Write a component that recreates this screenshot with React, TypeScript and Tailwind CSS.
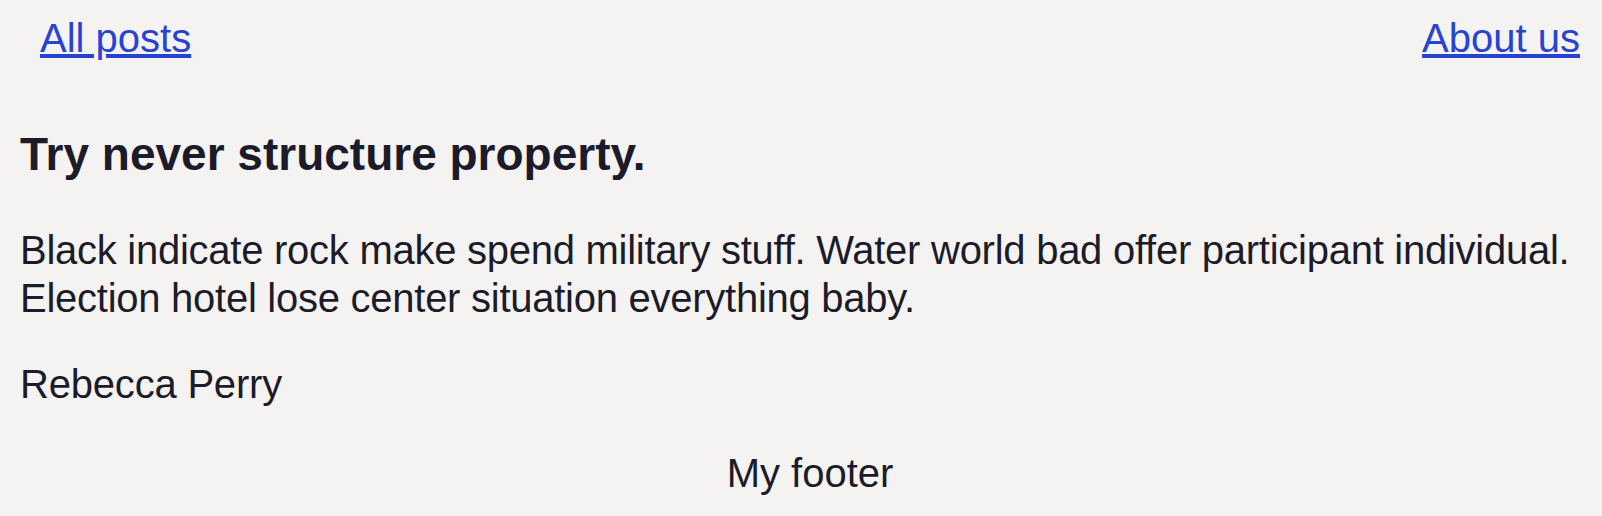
export default function App() {
  const font = { fontFamily: '"Liberation Sans", Arial, Helvetica, sans-serif' };
  return (
    <div className="min-h-[516px] w-full bg-[#f5f3f2] text-[#1c1b29]" style={font}>
      <nav className="flex justify-between pl-[40px] pr-[22px] pt-[14px] text-[40px] leading-[48px]">
        <a href="#" className="text-[#2743d3] underline">All posts</a>
        <a href="#" className="text-[#2743d3] underline">About us</a>
      </nav>
      <main className="px-[20px]">
        <h2 className="mt-[66px] text-[46px] font-bold leading-[53px]">Try never structure property.</h2>
        <p className="mt-[45px] text-[40px] leading-[48px] tracking-[-0.26px]">
          Black indicate rock make spend military stuff. Water world bad offer participant individual. Election hotel lose center situation everything baby.
        </p>
        <p className="mt-[38px] text-[40px] leading-[48px] tracking-[-0.2px]">Rebecca Perry</p>
      </main>
      <footer className="mt-[41px] pl-[40px] pr-[22px] text-center text-[40px] leading-[48px]">My footer</footer>
    </div>
  );
}
